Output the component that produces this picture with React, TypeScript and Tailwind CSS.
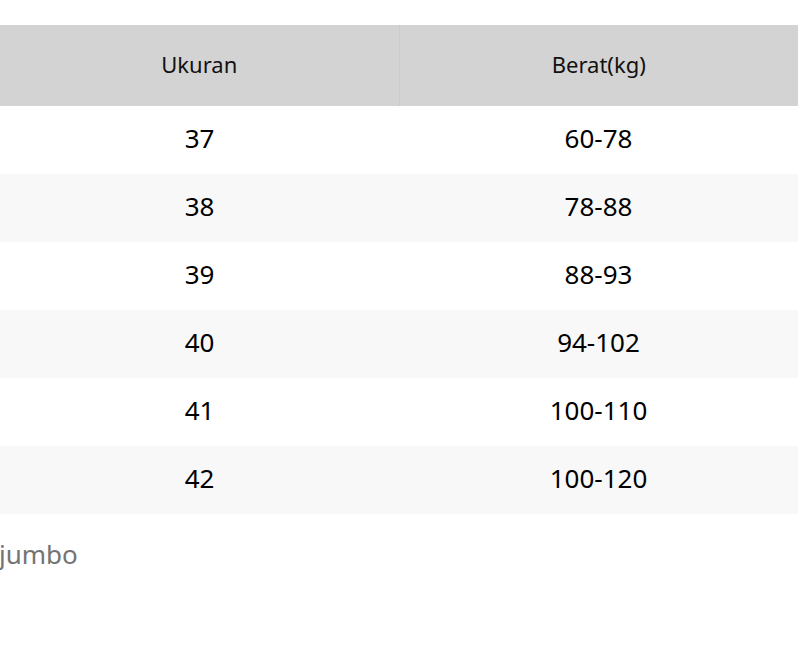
const rows = [
  { size: '37', weight: '60-78' },
  { size: '38', weight: '78-88' },
  { size: '39', weight: '88-93' },
  { size: '40', weight: '94-102' },
  { size: '41', weight: '100-110' },
  { size: '42', weight: '100-120' },
]

export default function App() {
  return (
    <div className="w-[800px] h-[670px] bg-white overflow-hidden pt-[25px] font-['Noto_Sans',sans-serif]">
      <table className="w-[798px] border-collapse table-fixed">
        <thead>
          <tr className="bg-[#d3d3d3] h-[81px]">
            <th className="w-1/2 pb-[2px] text-[22px] font-normal text-[#111] border-r border-[#cbcbcb]">Ukuran</th>
            <th className="w-1/2 pb-[2px] text-[22px] font-normal text-[#111]">Berat(kg)</th>
          </tr>
        </thead>
        <tbody>
          {rows.map((r, i) => (
            <tr key={r.size} className={i % 2 === 0 ? 'h-[68px] bg-white' : 'h-[68px] bg-[#f8f8f8]'}>
              <td className="pb-[4px] text-center text-[26px] text-black">{r.size}</td>
              <td className="pb-[4px] text-center text-[26px] text-black">{r.weight}</td>
            </tr>
          ))}
        </tbody>
      </table>
      <p className="mt-[20px] -ml-[1px] text-[26px] leading-[40px] text-[#747474]">jumbo</p>
    </div>
  )
}
